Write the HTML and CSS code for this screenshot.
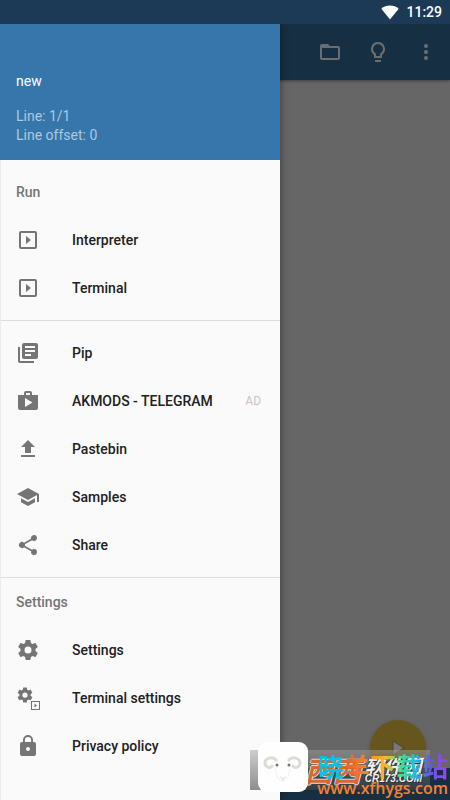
FILE: index.html
```html
<!DOCTYPE html>
<html lang="en">
<head>
<meta charset="utf-8">
<meta name="viewport" content="width=device-width, initial-scale=1">
<title>new</title>
<link rel="stylesheet" href="styles.css">
</head>
<body>
<svg class="defs" aria-hidden="true">
  <symbol id="play-box" viewBox="0 0 24 24"><path d="M19 3H5a2 2 0 0 0-2 2v14a2 2 0 0 0 2 2h14a2 2 0 0 0 2-2V5a2 2 0 0 0-2-2zm0 16H5V5h14zM10 8v8l5-4z"/></symbol>
  <symbol id="gear" viewBox="0 0 24 24"><path d="M19.43 12.98c.04-.32.07-.64.07-.98s-.03-.66-.07-.98l2.11-1.65c.19-.15.24-.42.12-.64l-2-3.46c-.12-.22-.39-.3-.61-.22l-2.49 1c-.52-.4-1.08-.73-1.69-.98l-.38-2.65C14.46 2.18 14.25 2 14 2h-4c-.25 0-.46.18-.49.42l-.38 2.65c-.61.25-1.17.59-1.69.98l-2.49-1c-.23-.09-.49 0-.61.22l-2 3.460c-.13.22-.07.49.12.64l2.110 1.650c-.04.32-.07.65-.07.98s.03.66.07.98l-2.110 1.650c-.19.15-.24.42-.12.64l2 3.460c.12.22.39.3.61.22l2.490-1c.52.4 1.080.73 1.690.98l.38 2.650c.03.24.24.42.49.42h4c.25 0 .46-.18.49-.42l.38-2.650c.61-.25 1.170-.59 1.690-.98l2.490 1c.23.09.49 0 .61-.22l2-3.460c.12-.22.07-.49-.12-.64zM12 15.500a3.500 3.500 0 1 1 0-7 3.500 3.500 0 0 1 0 7z"/></symbol>
</svg>
<div class="screen">
  <header class="status">
    <svg class="wifi" viewBox="0 0 18 15" aria-hidden="true"><path d="M9 14.500.3 3.800C2.700 1.600 5.700.5 9 .5s6.300 1.100 8.700 3.300z"/></svg>
    <time>11:29</time>
  </header>
  <div class="app">
    <div class="toolbar">
      <button class="tool" aria-label="Open"><svg class="icon" viewBox="0 0 24 24"><path d="M20 6h-8l-2-2H4a2 2 0 0 0-2 2v12a2 2 0 0 0 2 2h16a2 2 0 0 0 2-2V8a2 2 0 0 0-2-2zm0 12H4V8h16z"/></svg></button>
      <button class="tool" aria-label="Hints"><svg class="icon" viewBox="0 0 24 24"><path d="M9 21c0 .55.45 1 1 1h4c.55 0 1-.45 1-1v-1H9zm3-19a7 7 0 0 0-4 12.740V17c0 .55.45 1 1 1h6c.55 0 1-.45 1-1v-2.260A7 7 0 0 0 12 2zm2.850 11.100-.85.6V16h-4v-2.300l-.85-.6A5 5 0 1 1 14.850 13.100z"/></svg></button>
      <button class="tool" aria-label="More"><svg class="icon" viewBox="0 0 24 24"><circle cx="12" cy="6" r="2"/><circle cx="12" cy="12" r="2"/><circle cx="12" cy="18" r="2"/></svg></button>
    </div>
    <main class="editor"></main>
    <div class="keys"></div>
    <button class="fab" aria-label="Run"><svg class="icon" viewBox="0 0 24 24"><path d="M7 5v14l11-7z"/></svg></button>
    <nav class="drawer">
      <div class="info">
        <h1 class="file">new</h1>
        <p>Line: 1/1</p>
        <p>Line offset: 0</p>
      </div>
      <section class="group">
        <h2>Run</h2>
        <a class="item" href="#interpreter"><svg class="icon"><use href="#play-box"/></svg>Interpreter</a>
        <a class="item" href="#terminal"><svg class="icon"><use href="#play-box"/></svg>Terminal</a>
      </section>
      <section class="group">
        <a class="item" href="#pip"><svg class="icon" viewBox="0 0 24 24"><path d="M4 6H2v14a2 2 0 0 0 2 2h14v-2H4zM20 2H8a2 2 0 0 0-2 2v12a2 2 0 0 0 2 2h12a2 2 0 0 0 2-2V4a2 2 0 0 0-2-2zm-1 9H9V9h10zm-4 4H9v-2h6zm4-8H9V5h10z"/></svg>Pip</a>
        <a class="item" href="#akmods"><svg class="icon" viewBox="0 0 24 24"><path d="M16 6V4a2 2 0 0 0-2-2h-4a2 2 0 0 0-2 2v2H2v13a2 2 0 0 0 2 2h16a2 2 0 0 0 2-2V6zm-6-2h4v2h-4zM9 18V9l7.500 4.500z"/></svg>AKMODS - TELEGRAM<span class="ad">AD</span></a>
        <a class="item" href="#pastebin"><svg class="icon" viewBox="0 0 24 24"><path d="M9 16h6v-6h4l-7-7-7 7h4zm-4 2h14v2H5z"/></svg>Pastebin</a>
        <a class="item" href="#samples"><svg class="icon" viewBox="0 0 24 24"><path d="M5 13.180v4L12 21l7-3.820v-4L12 17zM12 3 1 9l11 6 9-4.910V17h2V9z"/></svg>Samples</a>
        <a class="item" href="#share"><svg class="icon" viewBox="0 0 24 24"><path d="M18 16.080c-.76 0-1.440.3-1.960.77L8.910 12.700c.05-.23.09-.46.09-.7s-.04-.47-.09-.7l7.050-4.110A3 3 0 1 0 15 5c0 .24.04.47.09.7L8.040 9.810a3 3 0 1 0 0 4.380l7.120 4.160a2.920 2.920 0 1 0 2.840-2.270z"/></svg>Share</a>
      </section>
      <section class="group">
        <h2>Settings</h2>
        <a class="item" href="#settings"><svg class="icon"><use href="#gear"/></svg>Settings</a>
        <a class="item" href="#terminal-settings"><svg class="icon" viewBox="0 0 24 24"><use href="#gear" x="0" y="0" width="18" height="18"/><path d="M15 15v9h9v-9zm1 1h7v7h-7zm2.500 1.500v4l2.500-2z"/></svg>Terminal settings</a>
        <a class="item" href="#privacy"><svg class="icon" viewBox="0 0 24 24"><path d="M18 8h-1V6A5 5 0 0 0 7 6v2H6a2 2 0 0 0-2 2v10a2 2 0 0 0 2 2h12a2 2 0 0 0 2-2V10a2 2 0 0 0-2-2zm-6 9a2 2 0 1 1 0-4 2 2 0 0 1 0 4zM15.100 8H8.900V6a3.100 3.100 0 0 1 6.200 0z"/></svg>Privacy policy</a>
      </section>
    </nav>
  </div>
  <aside class="mark">
    <div class="band">
      <span class="cx">西西</span>
      <span class="soft">软件园<small>CR173.COM</small></span>
    </div>
    <svg class="sheep" viewBox="0 0 50 50" aria-hidden="true">
      <rect width="50" height="50" rx="9" fill="#fefefe"/>
      <g fill="none" stroke="#dddbd6" stroke-width="3" stroke-linecap="round"><path d="M18 18c-3-4-11-2-11 3 0 4 5 6 7 3"/><path d="M31 18c3-4 11-2 11 3 0 4-5 6-7 3"/></g>
      <g fill="none" stroke="#f1f0ed"><path d="M17 26c1 8 4 13 8 13s6-5 7-12"/></g>
      <path d="M22 35l3 2 3-2M25 37v2" fill="none" stroke="#dddbd6"/>
      <circle cx="19" cy="23" r="1.500" fill="#777566"/><circle cx="31" cy="23" r="1.500" fill="#777566"/>
    </svg>
    <div class="site">
      <strong>晓羊下载站</strong>
      <span>www.xfhygs.com</span>
    </div>
  </aside>
</div>
</body>
</html>
```
FILE: styles.css
```css
* { box-sizing: border-box; }
body {
  margin: 0;
  font-family: Roboto, "Noto Sans CJK SC", sans-serif;
  font-size: 14px;
}
h1, h2, p { margin: 0; font: inherit; }
button { padding: 0; border: 0; background: none; color: inherit; }
.defs { position: absolute; width: 0; height: 0; }
.screen {
  position: relative;
  display: flex;
  flex-direction: column;
  min-height: 100vh;
  overflow: hidden;
}
.status {
  display: flex;
  align-items: center;
  justify-content: flex-end;
  gap: 7px;
  height: 24px;
  padding-right: 8px;
  background: #1c3a55;
  color: #fff;
  font-weight: 500;
}
.wifi { width: 18px; height: 15px; fill: #fff; }
.icon { width: 24px; height: 24px; flex: none; fill: currentColor; display: block; }
.app {
  position: relative;
  flex: 1;
  display: flex;
  flex-direction: column;
  overflow: hidden;
  background: #666;
}
.toolbar {
  display: flex;
  align-items: center;
  justify-content: flex-end;
  height: 56px;
  background: #172f43;
  color: #6b6e70;
  box-shadow: 0 1px 3px rgba(0, 0, 0, .4);
}
.tool { width: 48px; height: 48px; display: grid; place-items: center; }
.editor { flex: 1; }
.keys { height: 32px; background: #172f43; }
.fab {
  position: absolute;
  right: 24px;
  bottom: 24px;
  width: 56px;
  height: 56px;
  border-radius: 50%;
  display: grid;
  place-items: center;
  background: #66561d;
  color: #777;
  box-shadow: 0 2px 5px rgba(0, 0, 0, .2);
}
.fab path { stroke: #494537; }
.drawer {
  position: absolute;
  top: 0;
  bottom: 0;
  left: 0;
  width: 280px;
  background: #fafafa;
  border-left: 1px solid #ececec;
  box-shadow: 0 0 8px rgba(0, 0, 0, .45);
}
.info {
  display: flex;
  flex-direction: column;
  justify-content: flex-end;
  height: 136px;
  margin-left: -1px;
  padding: 0 16px 15px;
  background: #3776ab;
  color: #afc8dd;
  line-height: 19px;
}
.file { margin-bottom: 16px; color: #fff; }
.group { padding: 8px 0; }
.group + .group { border-top: 1px solid #dcdcdc; }
.group:last-child { padding-top: 0; }
.group h2 {
  padding-left: 15px;
  line-height: 48px;
  color: #757575;
  font-weight: 500;
}
.item {
  display: flex;
  align-items: center;
  height: 48px;
  padding: 0 19px 0 15px;
  color: #212121;
  font-weight: 500;
  text-decoration: none;
}
.item .icon { margin-right: 32px; color: #757575; }
.ad { margin-left: auto; color: #c4c4c4; font-size: 12px; font-weight: 400; }
.mark {
  position: absolute;
  right: 0;
  bottom: 0;
  width: 200px;
  height: 60px;
}
.band {
  position: absolute;
  left: 0;
  top: 10px;
  width: 180px;
  height: 40px;
  display: flex;
  justify-content: flex-end;
  gap: 4px;
  padding-right: 8px;
  background: linear-gradient(to bottom, rgba(160, 160, 160, .5), rgba(70, 70, 70, .6));
  font-family: "Noto Sans CJK SC", sans-serif;
  font-style: italic;
  font-weight: 700;
}
.cx {
  color: #d9662e;
  font-size: 28px;
  line-height: 40px;
  text-shadow: 1px 0 #ddd, -1px 0 #ddd, 0 1px #ddd, 0 -1px #ddd;
}
.soft {
  display: flex;
  flex-direction: column;
  padding-top: 5px;
  color: #eee;
  font-size: 19px;
  line-height: 19px;
  text-shadow: 1px 1px #333, -1px 0 #333;
}
.soft small { font-family: "Liberation Sans", sans-serif; font-size: 10px; line-height: 10px; }
.sheep { position: absolute; left: 8px; top: 2px; width: 50px; height: 50px; }
.site {
  position: absolute;
  right: 2px;
  top: 12px;
  display: flex;
  flex-direction: column;
  align-items: flex-end;
}
.site strong {
  font-family: "Noto Sans CJK SC", sans-serif;
  font-size: 26px;
  line-height: 28px;
  background: linear-gradient(to right, #00c5ed 18%, #f0613c 24%, #f68a20 38%, #ffb62b 52%, #48e28a 62%, #20bbdd 75%, #6756e8 86%, #9a45e8);
  background-clip: text;
  color: transparent;
}
.site span {
  font-family: "Open Sans", sans-serif;
  font-size: 16px;
  line-height: 16px;
  font-weight: 600;
  color: #f58232;
}
```
